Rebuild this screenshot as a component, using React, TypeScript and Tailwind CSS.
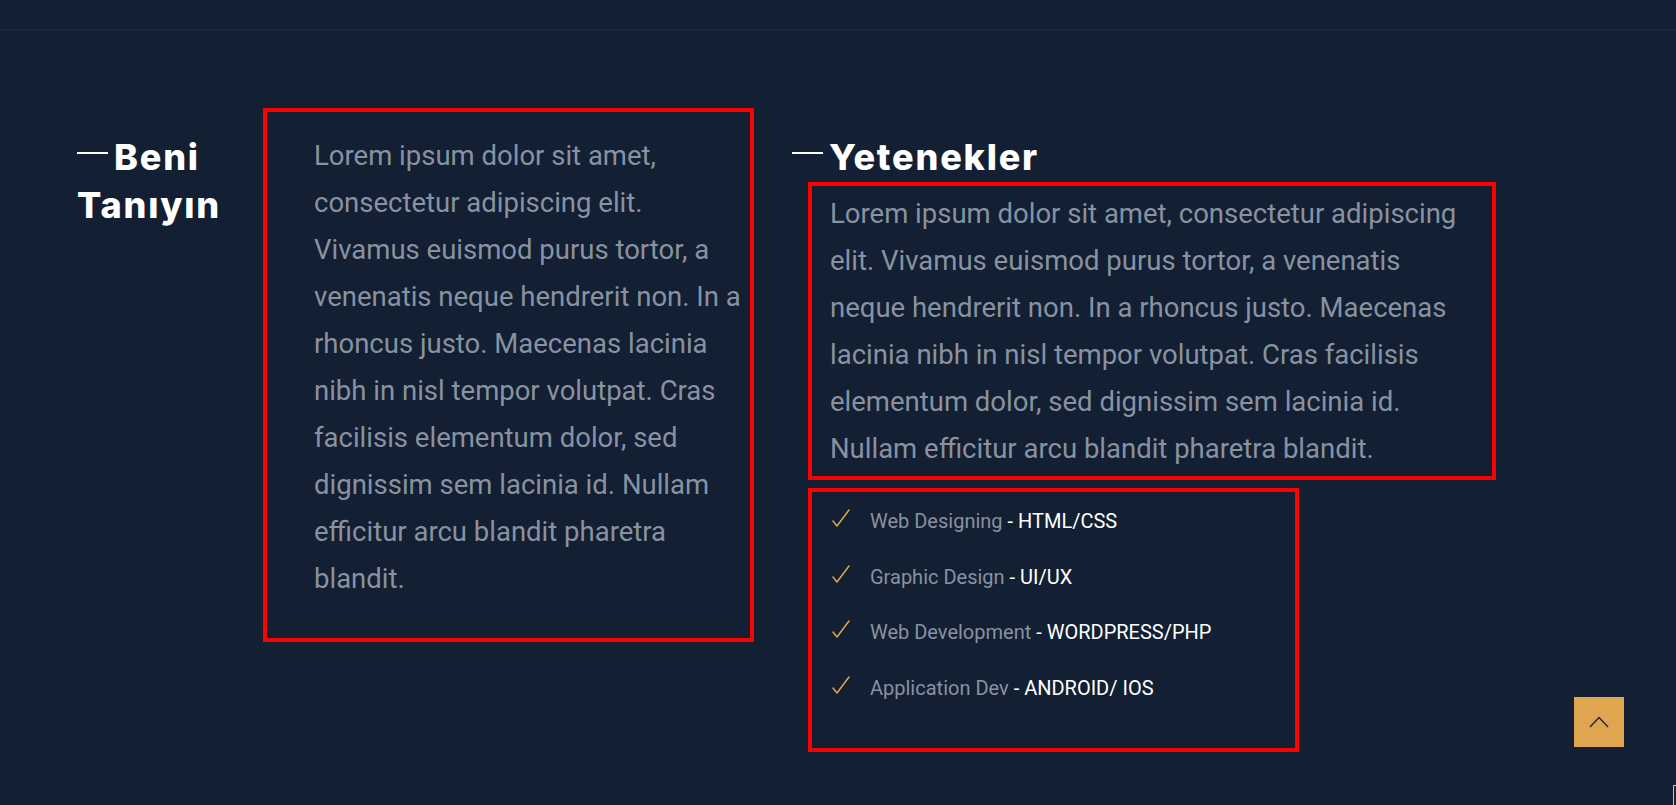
import { ReactNode } from 'react';

const lorem =
  'Lorem ipsum dolor sit amet, consectetur adipiscing elit. Vivamus euismod purus tortor, a venenatis neque hendrerit non. In a rhoncus justo. Maecenas lacinia nibh in nisl tempor volutpat. Cras facilisis elementum dolor, sed dignissim sem lacinia id. Nullam efficitur arcu blandit pharetra blandit.';

const skills = [
  { name: 'Web Designing', tech: 'HTML/CSS' },
  { name: 'Graphic Design', tech: 'UI/UX' },
  { name: 'Web Development', tech: 'WORDPRESS/PHP' },
  { name: 'Application Dev', tech: 'ANDROID/ IOS' },
];

function Heading({ children, className = '' }: { children: ReactNode; className?: string }) {
  return (
    <h2
      className={`font-['Inter',sans-serif] text-[36px] leading-[48px] font-extrabold tracking-[0.05em] text-white ${className}`}
    >
      <span className="mr-[6px] inline-block h-[2px] w-[31px] bg-white align-[16px]" />
      {children}
    </h2>
  );
}

function Check() {
  return (
    <svg width="18" height="18" viewBox="-1 -1 18 18" fill="none" className="mb-[6px] shrink-0">
      <path d="M0 11 L4 16 L16 0" stroke="#e2a54f" strokeWidth="1.5" strokeLinecap="round" strokeLinejoin="round" />
    </svg>
  );
}

export default function App() {
  return (
    <div className="relative min-h-[805px] bg-[#131f33] font-['Roboto',sans-serif]">
      <div className="h-[30px] border-b border-[#1c2a3f]" />

      <section className="flex items-start pt-[78px] pl-[77px]">
        <Heading className="mt-[25px] w-[186px] shrink-0">Beni Tanıyın</Heading>

        <div className="w-[491px] shrink-0 border-4 border-[#ff0000] pt-[20px] pb-[36px] pl-[47px]">
          <p className="text-[27.5px] leading-[47px] text-[#8892a0]">{lorem}</p>
        </div>

        <div className="ml-[38px] w-[706px] shrink-0">
          <Heading className="mt-[25px]">Yetenekler</Heading>

          <div className="mt-px ml-[16px] w-[688px] border-4 border-[#ff0000] pt-[4px] pb-[4px] pr-4 pl-[18px]">
            <p className="text-[27.5px] leading-[47px] text-[#8892a0]">{lorem}</p>
          </div>

          <ul className="mt-[8px] ml-[16px] flex w-[491px] flex-col gap-[25.67px] border-4 border-[#ff0000] pt-[14px] pb-[45px] pl-[20px]">
            {skills.map((s) => (
              <li key={s.name} className="flex items-center gap-[20px] text-[20px] leading-[30px]">
                <Check />
                <span>
                  <span className="text-[#8892a0]">{s.name}</span>
                  <span className="text-white"> - {s.tech}</span>
                </span>
              </li>
            ))}
          </ul>
        </div>
      </section>

      <button
        type="button"
        className="absolute top-[697px] left-[1574px] flex h-[50px] w-[50px] items-center justify-center bg-[#e2a54f]"
      >
        <svg width="50" height="50" viewBox="0 0 50 50" fill="none">
          <polyline points="16,30 25,20.5 34,30" stroke="#1f2a3a" strokeWidth="1.5" />
        </svg>
      </button>

      <div className="absolute right-0 bottom-0 h-[20px] w-[3px] border-t border-l border-[#c4c4c4] bg-[#222222]" />
    </div>
  );
}
